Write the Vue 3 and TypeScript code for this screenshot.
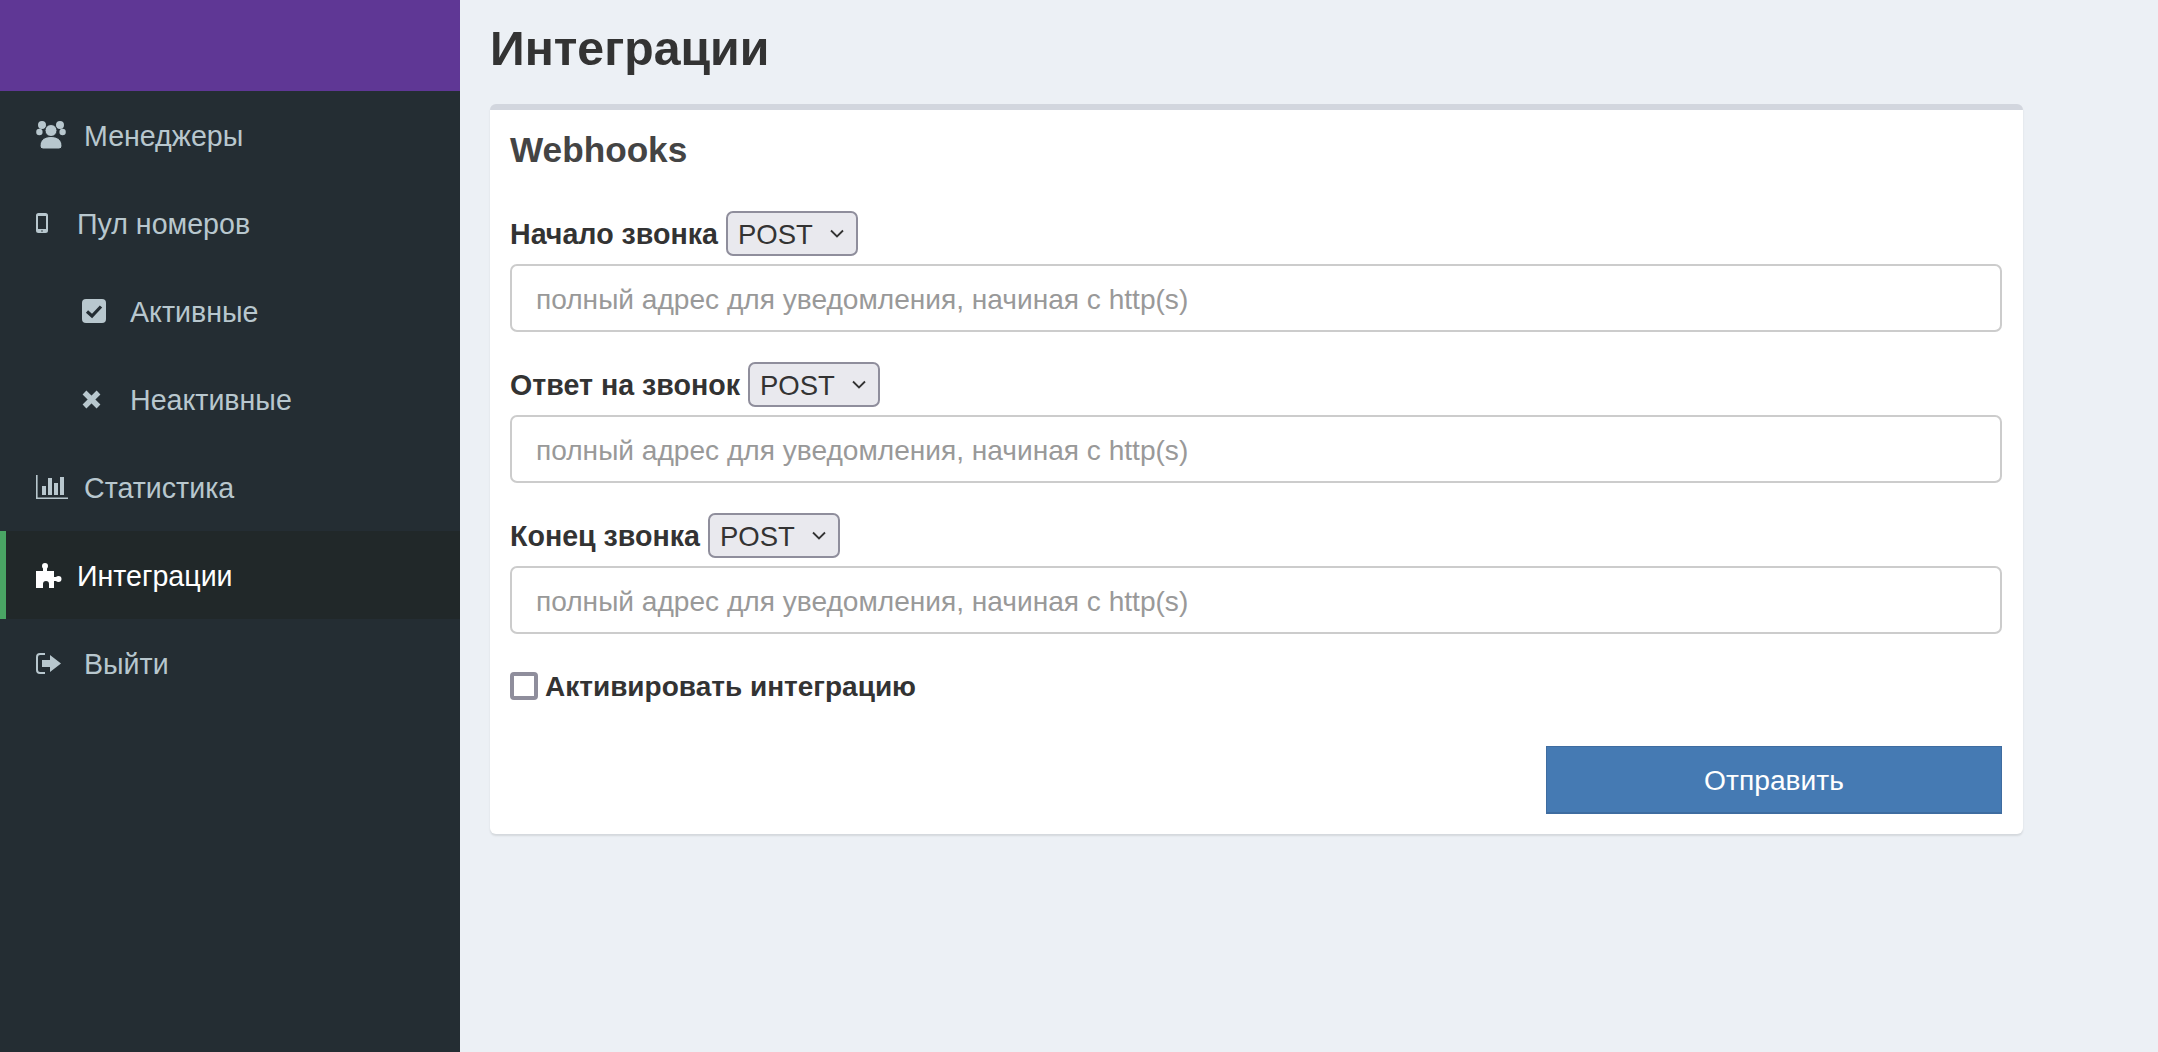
<script setup lang="ts">
interface Shape { d: string; fill?: string; stroke?: string; sw?: number }
interface Item { label: string; w: number; h: number; slot: string; sub?: boolean; active?: boolean; shapes: Shape[] }

const bg = '#242d33'
const circle = (cx: number, cy: number, r: number): string =>
  `M${cx - r} ${cy}a${r} ${r} 0 1 0 ${2 * r} 0a${r} ${r} 0 1 0 ${-2 * r} 0Z`

const items: Item[] = [
  {
    label: 'Менеджеры', w: 30, h: 28, slot: 'wide',
    shapes: [
      { d: circle(6, 4, 4) + circle(24, 4, 4) + circle(3.4, 11, 3.2) + circle(26.6, 11, 3.2) },
      { d: circle(15, 9.5, 6), stroke: bg, sw: 1 },
      { d: 'M4 25C4 18.5 9 15.5 15 15.5C21 15.5 26 18.5 26 25Q26 28 23 28H7Q4 28 4 25Z', stroke: bg, sw: 1 }
    ]
  },
  {
    label: 'Пул номеров', w: 12, h: 20, slot: 'narrow',
    shapes: [
      { d: 'M2.5 0H9.5Q12 0 12 2.5V17.5Q12 20 9.5 20H2.5Q0 20 0 17.5V2.5Q0 0 2.5 0ZM2 3V16H10V3Z' },
      { d: circle(6, 18, .8), fill: bg }
    ]
  },
  {
    label: 'Активные', w: 24, h: 24, slot: 'wide', sub: true,
    shapes: [
      { d: 'M4 0H20Q24 0 24 4V20Q24 24 20 24H4Q0 24 0 20V4Q0 0 4 0Z' },
      { d: 'M5 12.5L10 17L19 7.5', fill: 'none', stroke: bg, sw: 3.2 }
    ]
  },
  {
    label: 'Неактивные', w: 19, h: 19, slot: 'wide', sub: true,
    shapes: [{ d: 'M2.5 2.5L16.5 16.5M16.5 2.5L2.5 16.5', fill: 'none', stroke: '#b8c7ce', sw: 5.4 }]
  },
  {
    label: 'Статистика', w: 32, h: 24, slot: 'wide',
    shapes: [{ d: 'M0 0H1.6V22.4H32V24H0ZM6 11H10V20H6ZM12 3H16V20H12ZM18 8H22V20H18ZM24 2H28V20H24Z' }]
  },
  {
    label: 'Интеграции', w: 26, h: 25, slot: 'narrow', active: true,
    shapes: [
      { d: circle(9, 3, 3) + circle(22.5, 16, 3) },
      { d: 'M7 5H11V8H18V14H22V18H18V25H13V21A3 3 0 0 0 7 21V25H0V8H7Z' }
    ]
  },
  {
    label: 'Выйти', w: 25, h: 21, slot: 'wide',
    shapes: [
      { d: 'M9 1H4Q1 1 1 4V17Q1 20 4 20H9', fill: 'none', stroke: '#b8c7ce', sw: 2 },
      { d: 'M6 7H14V2L25 10.5L14 19V14H6Z' }
    ]
  }
]

const webhooks: string[] = ['Начало звонка', 'Ответ на звонок', 'Конец звонка']
</script>

<template>
  <div class="layout">
    <aside class="sidebar">
      <div class="brand"></div>
      <nav>
        <a
          v-for="item in items"
          :key="item.label"
          class="nav-item"
          :class="{ sub: item.sub, active: item.active }"
        >
          <span class="icon-slot" :class="item.slot">
            <svg :width="item.w" :height="item.h" :viewBox="`0 0 ${item.w} ${item.h}`">
              <path
                v-for="(s, i) in item.shapes"
                :key="i"
                :d="s.d"
                :fill="s.fill ?? 'currentColor'"
                :stroke="s.stroke ?? 'none'"
                :stroke-width="s.sw ?? 0"
              />
            </svg>
          </span>
          <span class="nav-label">{{ item.label }}</span>
        </a>
      </nav>
    </aside>
    <main class="content">
      <h1>Интеграции</h1>
      <section class="box">
        <h2>Webhooks</h2>
        <form class="form" @submit.prevent>
          <div v-for="name in webhooks" :key="name" class="field">
            <div class="field-head">
              <label>{{ name }}</label>
              <span class="select-wrap">
                <select>
                  <option>POST</option>
                  <option>GET</option>
                </select>
                <svg class="chev" width="16" height="10" viewBox="0 0 16 10">
                  <path d="M2 1.5L8 7.5L14 1.5" fill="none" stroke="#333" stroke-width="1.8" />
                </svg>
              </span>
            </div>
            <input type="text" placeholder="полный адрес для уведомления, начиная с http(s)" />
          </div>
          <label class="check">
            <input type="checkbox" />
            <span>Активировать интеграцию</span>
          </label>
          <div class="actions">
            <button type="submit">Отправить</button>
          </div>
        </form>
      </section>
    </main>
  </div>
</template>

<style>
html, body { margin: 0; padding: 0; background: #ecf0f5; }
</style>

<style scoped>
.layout {
  display: flex;
  height: 1052px;
  overflow: hidden;
  font-family: "Liberation Sans", Arial, sans-serif;
  color: #333;
  background: #ecf0f5;
}
.sidebar { width: 460px; flex: none; background: #242d33; }
.brand { height: 91px; background: #5f3795; }
.nav-item {
  display: flex;
  align-items: center;
  height: 88px;
  padding-left: 36px;
  font-size: 28.6px;
  color: #b8c7ce;
  box-sizing: border-box;
}
.nav-label { padding-top: 2px; }
.nav-item.sub { padding-left: 82px; }
.nav-item.active {
  padding-left: 30px;
  color: #fff;
  background: #212829;
  border-left: 6px solid #4aa564;
}
.icon-slot { display: flex; flex: none; align-items: center; }
.icon-slot.wide { width: 48px; }
.icon-slot.narrow { width: 41px; }
.content { flex: none; width: 1533px; margin-left: 30px; }
h1 {
  margin: 0;
  height: 104px;
  font-size: 48.2px;
  line-height: 97px;
  font-weight: 700;
  color: #333;
}
.box {
  height: 730px;
  box-sizing: border-box;
  padding: 0 21px 20px 20px;
  background: #fff;
  border-top: 6px solid #d2d6de;
  border-radius: 6px;
  box-shadow: 0 2px 2px rgba(0, 0, 0, .1);
}
h2 {
  margin: 0;
  height: 78px;
  font-size: 35.2px;
  line-height: 80px;
  font-weight: 700;
  color: #444;
}
.form { display: flex; flex-direction: column; padding-top: 23px; }
.field { margin-bottom: 30px; }
.field-head {
  display: flex;
  align-items: center;
  height: 45px;
  margin-bottom: 8px;
  gap: 8px;
}
.field-head label { padding-top: 2px; font-size: 28.6px; font-weight: 700; color: #333; }
.select-wrap { position: relative; display: block; width: 132px; height: 45px; }
select {
  appearance: none;
  width: 100%;
  height: 100%;
  box-sizing: border-box;
  padding: 2px 0 0 10px;
  font: 27.5px "Liberation Sans", Arial, sans-serif;
  color: #333;
  background: #e9e9ee;
  border: 2px solid #8f8e9c;
  border-radius: 7px;
}
.chev { position: absolute; top: 18px; right: 13px; pointer-events: none; }
.field > input {
  display: block;
  width: 100%;
  height: 68px;
  box-sizing: border-box;
  padding: 3px 24px 0;
  font: 28.1px "Liberation Sans", Arial, sans-serif;
  background: #fff;
  border: 2px solid #ccc;
  border-radius: 7px;
  outline: none;
}
.field > input::placeholder { color: #999; opacity: 1; }
.check {
  display: flex;
  align-items: center;
  gap: 7px;
  height: 28px;
  margin-top: 8px;
  font-size: 28px;
  font-weight: 700;
  color: #333;
}
.check span { padding-top: 1px; }
.check input {
  appearance: none;
  width: 28px;
  height: 28px;
  margin: 0;
  box-sizing: border-box;
  background: #fff;
  border: 4px solid #8f8e9c;
  border-radius: 4px;
}
.actions { display: flex; justify-content: flex-end; margin-top: 46px; }
button {
  width: 456px;
  height: 68px;
  padding: 2px 0 0;
  font: 28.2px "Liberation Sans", Arial, sans-serif;
  color: #fff;
  background: #457ab3;
  border: 1px solid #3e6ca0;
  border-bottom-width: 2px;
  border-radius: 0;
}
</style>
